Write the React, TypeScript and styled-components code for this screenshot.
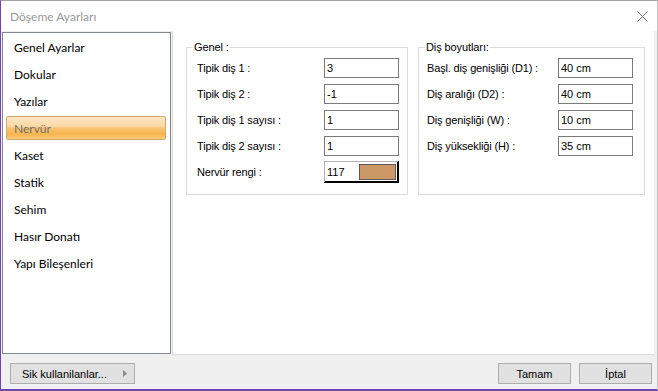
import React from 'react'
import styled, { createGlobalStyle } from 'styled-components'

const GlobalStyle = createGlobalStyle`
  html, body {
    margin: 0;
    padding: 0;
    background: #ffffff;
  }

  * {
    box-sizing: border-box;
  }
`

const Window = styled.div`
  width: 658px;
  height: 391px;
  display: flex;
  flex-direction: column;
  background: #f0f0f0;
  border-top: 1px solid #a3a3a3;
  border-left: 1px solid #7042b3;
  border-right: 1px solid #c4c4c4;
  border-bottom: 2px solid #7042b3;
  font-family: 'Liberation Sans', Arial, sans-serif;
  font-size: 11px;
  color: #000;
`

const TitleBar = styled.div`
  height: 30px;
  flex: none;
  display: flex;
  align-items: center;
  justify-content: space-between;
  padding: 0 9px;
  background: #fff;
  font-family: Lato, 'Noto Sans', sans-serif;
  font-size: 12px;
  color: #999999;
`

const Body = styled.div`
  height: 324px;
  flex: none;
  display: flex;
  gap: 1px;
  padding: 0 3px 0 1px;
`

const Sidebar = styled.ul`
  width: 169px;
  flex: none;
  margin: 1px 0;
  padding: 2px 4px 0 3px;
  list-style: none;
  background: #fff;
  border: 1px solid #828790;
  font-family: Lato, 'Noto Sans', sans-serif;
  font-size: 12px;
`

const SideItem = styled.li<{ $active?: boolean }>`
  height: 24px;
  margin-bottom: 3px;
  padding-left: 7px;
  display: flex;
  align-items: center;
  border: 1px solid ${p => (p.$active ? '#d2a86e' : 'transparent')};
  border-radius: 2px;
  color: ${p => (p.$active ? '#707070' : '#000')};
  background: ${p =>
    p.$active
      ? 'linear-gradient(#fde5c4 0%, #fcd9a6 42%, #f9c270 52%, #f7b54c 78%, #facb7e 100%)'
      : 'transparent'};
`

const Content = styled.div`
  flex: 1;
  background: #fff;
  border-left: 1px solid #dadada;
  border-bottom: 1px solid #dadada;
  padding: 10px 0 0 13px;
`

const GroupRow = styled.div`
  display: flex;
  gap: 10px;
`

const Group = styled.fieldset<{ $width: number; $padLeft: number; $padRight: number }>`
  width: ${p => p.$width}px;
  margin: 0;
  padding: 4px ${p => p.$padRight}px 12px ${p => p.$padLeft}px;
  border: 1px solid #dcdcdc;
  display: flex;
  flex-direction: column;
  gap: 6px;
`

const Legend = styled.legend<{ $offset: number }>`
  margin-left: ${p => p.$offset}px;
  padding: 0 1px;
  line-height: 13px;
  font-size: 11px;
  letter-spacing: -0.1px;
`

const Row = styled.div`
  height: 20px;
  display: flex;
  align-items: center;
  justify-content: space-between;
`

const Label = styled.span`
  white-space: nowrap;
  letter-spacing: -0.15px;
`

const TextBox = styled.input`
  width: 75px;
  height: 20px;
  padding: 0 2px;
  border: 1px solid #7a7a7a;
  background: #fff;
  font-family: 'Liberation Sans', Arial, sans-serif;
  font-size: 11px;
  color: #000;
  outline: none;
`

const ColorField = styled.div`
  width: 75px;
  height: 22px;
  display: flex;
  align-items: center;
  background: #fff;
  border-style: solid;
  border-width: 1px 2px 2px 1px;
  border-color: #b4b4b4 #000 #000 #b4b4b4;
`

const ColorValue = styled.span`
  flex: 1;
  padding-left: 2px;
`

const Swatch = styled.span<{ $color: string }>`
  width: 37px;
  height: 16px;
  margin-right: 1px;
  background: ${p => p.$color};
  border: 1px solid #5a5a5a;
`

const Footer = styled.div`
  height: 34px;
  flex: none;
  display: flex;
  align-items: flex-start;
  gap: 8px;
  padding: 8px 5px 0 9px;
`

const Button = styled.button<{ $width: number }>`
  width: ${p => p.$width}px;
  height: 21px;
  padding: 0;
  background: #e1e1e1;
  border: 1px solid #adadad;
  font-family: 'Liberation Sans', Arial, sans-serif;
  font-size: 11px;
  color: #000;
`

const MenuButton = styled(Button)`
  display: flex;
  align-items: center;
  justify-content: space-between;
  padding: 0 7px 0 11px;
  margin-right: auto;
`

const menuItems = [
  'Genel Ayarlar',
  'Dokular',
  'Yazılar',
  'Nervür',
  'Kaset',
  'Statik',
  'Sehim',
  'Hasır Donatı',
  'Yapı Bileşenleri',
]

const genel = [
  { label: 'Tipik diş 1 :', value: '3' },
  { label: 'Tipik diş 2 :', value: '-1' },
  { label: 'Tipik diş 1 sayısı :', value: '1' },
  { label: 'Tipik diş 2 sayısı :', value: '1' },
]

const boyutlar = [
  { label: 'Başl. diş genişliği (D1) :', value: '40 cm' },
  { label: 'Diş aralığı (D2) :', value: '40 cm' },
  { label: 'Diş genişliği (W) :', value: '10 cm' },
  { label: 'Diş yüksekliği (H) :', value: '35 cm' },
]

const CloseIcon = () => (
  <svg width="11" height="11" viewBox="0 0 11 11">
    <path d="M0.5 0.5 L10.5 10.5 M10.5 0.5 L0.5 10.5" stroke="#6f6f6f" strokeWidth="1" fill="none" />
  </svg>
)

const Arrow = () => (
  <svg width="4" height="7" viewBox="0 0 4 7">
    <path d="M0 0 L4 3.5 L0 7 Z" fill="#8a8a8a" />
  </svg>
)

export default function App() {
  return (
    <>
      <GlobalStyle />
      <Window>
        <TitleBar>
          <span>Döşeme Ayarları</span>
          <CloseIcon />
        </TitleBar>
        <Body>
          <Sidebar>
            {menuItems.map(item => (
              <SideItem key={item} $active={item === 'Nervür'}>
                {item}
              </SideItem>
            ))}
          </Sidebar>
          <Content>
            <GroupRow>
              <Group $width={222} $padLeft={10} $padRight={8}>
                <Legend $offset={-4}>Genel :</Legend>
                {genel.map(r => (
                  <Row key={r.label}>
                    <Label>{r.label}</Label>
                    <TextBox defaultValue={r.value} />
                  </Row>
                ))}
                <Row>
                  <Label>Nervür rengi :</Label>
                  <ColorField>
                    <ColorValue>117</ColorValue>
                    <Swatch $color="#cc9966" />
                  </ColorField>
                </Row>
              </Group>
              <Group $width={227} $padLeft={8} $padRight={11}>
                <Legend $offset={-2}>Diş boyutları:</Legend>
                {boyutlar.map(r => (
                  <Row key={r.label}>
                    <Label>{r.label}</Label>
                    <TextBox defaultValue={r.value} />
                  </Row>
                ))}
              </Group>
            </GroupRow>
          </Content>
        </Body>
        <Footer>
          <MenuButton $width={125}>
            <span>Sik kullanilanlar...</span>
            <Arrow />
          </MenuButton>
          <Button $width={73}>Tamam</Button>
          <Button $width={73}>İptal</Button>
        </Footer>
      </Window>
    </>
  )
}
